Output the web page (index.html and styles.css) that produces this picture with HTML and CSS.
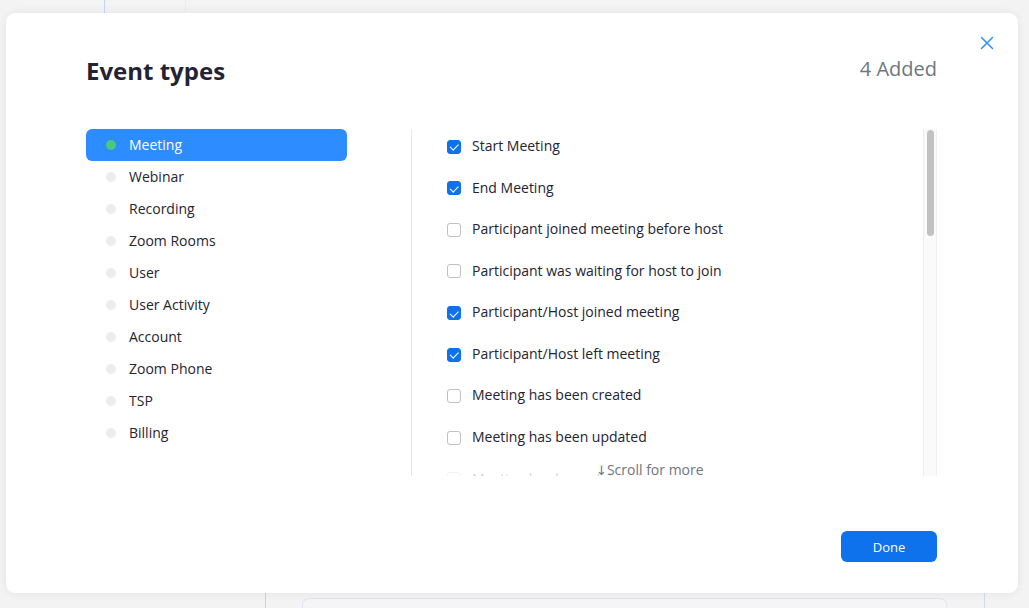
FILE: index.html
```html
<!DOCTYPE html>
<html lang="en">
<head>
<meta charset="utf-8">
<title>Event types</title>
<link rel="stylesheet" href="styles.css">
</head>
<body>
<div class="backdrop">
  <div class="bd-top">
    <div class="bd-line bd-line-a"></div>
    <div class="bd-line bd-line-faint"></div>
  </div>
  <div class="bd-mid"></div>
  <div class="bd-bottom">
    <div class="bd-line bd-line-b"></div>
    <div class="bd-box"></div>
    <div class="bd-line bd-line-c"></div>
  </div>
</div>

<div class="modal">
  <button class="close" aria-label="Close">
    <svg width="14" height="14" viewBox="0 0 14 14"><path d="M1.5 1.5 L12.5 12.5 M12.5 1.5 L1.5 12.5" stroke="#2d8cff" stroke-width="1.5" fill="none" stroke-linecap="round"/></svg>
  </button>
  <div class="header">
    <h1 class="title">Event types</h1>
    <div class="count">4 Added</div>
  </div>
  <div class="content">
    <ul class="nav">
      <li class="nav-item active"><span class="dot"></span>Meeting</li>
      <li class="nav-item"><span class="dot"></span>Webinar</li>
      <li class="nav-item"><span class="dot"></span>Recording</li>
      <li class="nav-item"><span class="dot"></span>Zoom Rooms</li>
      <li class="nav-item"><span class="dot"></span>User</li>
      <li class="nav-item"><span class="dot"></span>User Activity</li>
      <li class="nav-item"><span class="dot"></span>Account</li>
      <li class="nav-item"><span class="dot"></span>Zoom Phone</li>
      <li class="nav-item"><span class="dot"></span>TSP</li>
      <li class="nav-item"><span class="dot"></span>Billing</li>
    </ul>
    <div class="events">
      <div class="events-scroll">
        <div class="clip">
          <ul class="event-list">
            <li class="event"><span class="cb checked"></span>Start Meeting</li>
            <li class="event"><span class="cb checked"></span>End Meeting</li>
            <li class="event"><span class="cb"></span>Participant joined meeting before host</li>
            <li class="event"><span class="cb"></span>Participant was waiting for host to join</li>
            <li class="event"><span class="cb checked"></span>Participant/Host joined meeting</li>
            <li class="event"><span class="cb checked"></span>Participant/Host left meeting</li>
            <li class="event"><span class="cb"></span>Meeting has been created</li>
            <li class="event"><span class="cb"></span>Meeting has been updated</li>
            <li class="event faded"><span class="cb"></span>Meeting has been deleted</li>
          </ul>
        </div>
        <div class="scroll-hint"><span class="arrow">↓</span>Scroll for more</div>
      </div>
      <div class="scrollbar"><div class="thumb"></div></div>
    </div>
  </div>
  <div class="footer">
    <button class="done">Done</button>
  </div>
</div>
</body>
</html>
```

FILE: styles.css
```css
* { box-sizing: border-box; }
html, body {
  margin: 0;
  padding: 0;
  width: 1029px;
  height: 608px;
  overflow: hidden;
  background: #f3f3f4;
  font-family: "Open Sans", "Liberation Sans", sans-serif;
  color: #232333;
}

/* backdrop page (behind the overlay) */
.backdrop {
  display: flex;
  flex-direction: column;
  height: 608px;
}
.bd-top {
  height: 13px;
  display: flex;
}
.bd-line {
  width: 1px;
  background: #bfd6f7;
}
.bd-line-a { margin-left: 104px; }
.bd-line-faint { margin-left: 80px; background: #ececed; }
.bd-mid { height: 580px; }
.bd-bottom {
  height: 15px;
  display: flex;
}
.bd-line-b { margin-left: 265px; }
.bd-box {
  margin-left: 36px;
  margin-top: 5px;
  width: 645px;
  border: 1px solid #dfe4ee;
  border-bottom: none;
  border-radius: 7px 7px 0 0;
  background: #f5f5f6;
}
.bd-line-c { margin-left: 37px; background: #cfdcf0; }

/* modal */
.modal {
  position: absolute;
  left: 6px;
  top: 13px;
  width: 1012px;
  height: 580px;
  background: #fff;
  border-radius: 9px;
  box-shadow: 0 0 10px rgba(0, 0, 0, 0.07);
  padding: 42px 81px 31px 80px;
  display: flex;
  flex-direction: column;
}
.close {
  position: absolute;
  right: 24px;
  top: 23px;
  width: 14px;
  height: 14px;
  padding: 0;
  border: 0;
  background: none;
  display: flex;
}
.header {
  display: flex;
  justify-content: space-between;
  align-items: baseline;
  height: 32px;
}
.title {
  margin: 0;
  font-size: 24px;
  line-height: 32px;
  font-weight: 700;
  color: #232333;
}
.count {
  font-size: 20px;
  line-height: 24px;
  color: #6e7680;
  position: relative;
  top: -4px;
}

.content {
  margin-top: 42px;
  height: 347px;
  display: flex;
}
.nav {
  list-style: none;
  margin: 0;
  padding: 0;
  width: 261px;
}
.nav-item {
  height: 32px;
  border-radius: 6px;
  display: flex;
  align-items: center;
  padding-left: 20px;
  padding-bottom: 2px;
  font-size: 14px;
  color: #232333;
}
.nav-item .dot {
  width: 10px;
  height: 10px;
  border-radius: 50%;
  background: #ededf0;
  margin-right: 13px;
  position: relative;
  top: 1px;
}
.nav-item.active {
  background: #2d8cff;
  color: #fff;
}
.nav-item.active .dot { background: #4dc77a; }

.events {
  margin-left: 64px;
  flex: 1;
  display: flex;
  border-left: 1px solid #e8e8ec;
}
.events-scroll {
  flex: 1;
  position: relative;
}
.clip {
  height: 100%;
  overflow: hidden;
}
.event-list {
  list-style: none;
  margin: 0;
  padding: 6px 0 0 35px;
}
.event {
  display: flex;
  align-items: center;
  height: 21.6px;
  margin-bottom: 19.97px;
  font-size: 14px;
  line-height: 21.6px;
  color: #232333;
}
.event.faded { opacity: 0.2; }
.cb {
  width: 14px;
  height: 14px;
  border-radius: 3px;
  border: 1px solid #bfbfc6;
  background: #fff;
  margin-right: 11px;
  flex: none;
  position: relative;
  top: 1px;
}
.cb.checked {
  background: #0e72ed;
  border-color: #0e72ed;
}
.cb.checked::after {
  content: "";
  position: absolute;
  left: 3.5px;
  top: 1.5px;
  width: 3.5px;
  height: 6.5px;
  border-right: 1.5px solid #fff;
  border-bottom: 1.5px solid #fff;
  transform: rotate(45deg);
}
.scroll-hint {
  position: absolute;
  left: 184px;
  bottom: -5px;
  font-size: 14px;
  line-height: 20px;
  color: #6e7680;
  display: flex;
  align-items: baseline;
}
.scroll-hint .arrow {
  font-family: "DejaVu Sans", sans-serif;
  font-size: 13px;
}
.scrollbar {
  width: 14px;
  background: #fafafa;
  border-left: 1px solid #ececec;
  border-right: 1px solid #f1f1f1;
  padding: 1px 2px 0 3px;
}
.thumb {
  height: 106px;
  border-radius: 4px;
  background: #c1c1c3;
}

.footer {
  margin-top: 55px;
  display: flex;
  justify-content: flex-end;
}
.done {
  width: 96px;
  height: 31px;
  border: 0;
  border-radius: 6px;
  background: #0e72ed;
  color: #fff;
  font-family: "Open Sans", "Liberation Sans", sans-serif;
  font-size: 13px;
  padding: 0;
}
```
